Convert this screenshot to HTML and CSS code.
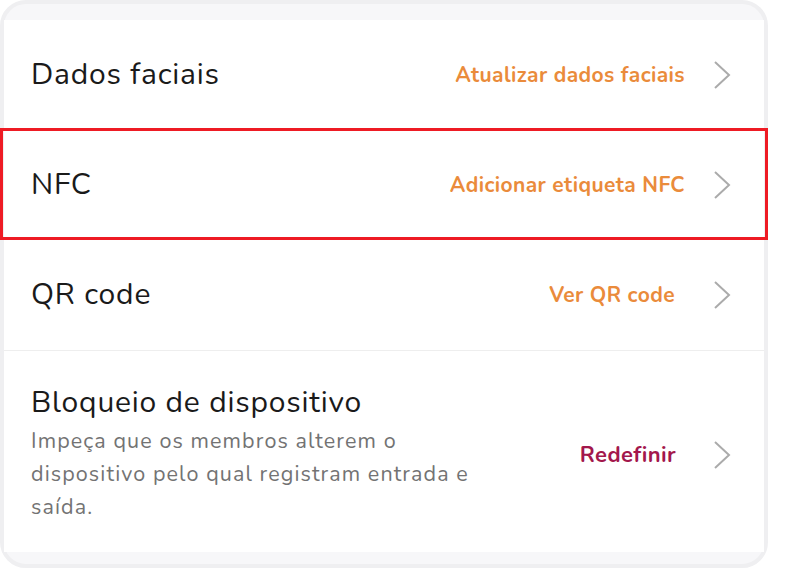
FILE: index.html
```html
<!DOCTYPE html>
<html lang="pt">
<head>
    <meta charset="UTF-8">
    <meta name="viewport" content="width=device-width, initial-scale=1.0">
    <title>Configurações</title>
    <link rel="stylesheet" href="styles.css">
</head>
<body>

    <div class="card">
        <div class="row">
            <div class="row-title">Dados faciais</div>
            <div class="row-action orange">Atualizar dados faciais</div>
            <svg class="chevron" viewBox="0 0 18 30"><polyline points="2,2 16,15 2,28"/></svg>
        </div>

        <div class="row highlight">
            <div class="row-title">NFC</div>
            <div class="row-action orange">Adicionar etiqueta NFC</div>
            <svg class="chevron" viewBox="0 0 18 30"><polyline points="2,2 16,15 2,28"/></svg>
        </div>

        <div class="row separated">
            <div class="row-title">QR code</div>
            <div class="row-action orange short">Ver QR code</div>
            <svg class="chevron" viewBox="0 0 18 30"><polyline points="2,2 16,15 2,28"/></svg>
        </div>

        <div class="row tall">
            <div class="row-body">
                <div class="row-title">Bloqueio de dispositivo</div>
                <div class="row-desc">Impeça que os membros alterem o dispositivo pelo qual registram entrada e saída.</div>
            </div>
            <div class="row-action crimson">Redefinir</div>
            <svg class="chevron" viewBox="0 0 18 30"><polyline points="2,2 16,15 2,28"/></svg>
        </div>
    </div>

</body>
</html>
```

FILE: styles.css
```css
body {
    margin: 0;
    background-color: #fff;
    font-family: "Nunito", Lato, "Noto Sans", sans-serif;
}

.card {
    box-sizing: border-box;
    width: 768px;
    height: 568px;
    border: 4px solid #efeff1;
    border-radius: 26px;
    background-color: #f7f7f9;
    padding-top: 16px;
}

.row {
    position: relative;
    display: flex;
    align-items: center;
    height: 110px;
    padding: 0 33px 0 27px;
    background-color: #fff;
}

.row.separated {
    border-bottom: 1px solid #eeeeee;
}

.row.highlight::after {
    content: "";
    position: absolute;
    top: -2px;
    bottom: 0;
    left: -4px;
    right: -4px;
    border: 3px solid #ee1b24;
}

.row.tall {
    height: auto;
    padding-top: 34px;
    padding-bottom: 28px;
}

.row-body {
    flex: 1;
}

.row-title {
    flex: 1;
    font-size: 30px;
    line-height: 36px;
    letter-spacing: 0.8px;
    color: #1a1a1a;
}

.row-desc {
    max-width: 460px;
    margin-top: 4px;
    font-size: 21.5px;
    line-height: 33px;
    letter-spacing: 1.1px;
    color: #737373;
}

.row-action {
    font-size: 21px;
    font-weight: bold;
    letter-spacing: 0.4px;
    margin-right: 28px;
}

.row-action.short {
    margin-right: 38px;
}

.orange {
    color: #ea8b3b;
}

.crimson {
    color: #a3174c;
    font-size: 22px;
    margin-right: 37px;
}

.chevron {
    width: 18px;
    height: 30px;
    fill: none;
    stroke: #ababab;
    stroke-width: 2;
}
```
